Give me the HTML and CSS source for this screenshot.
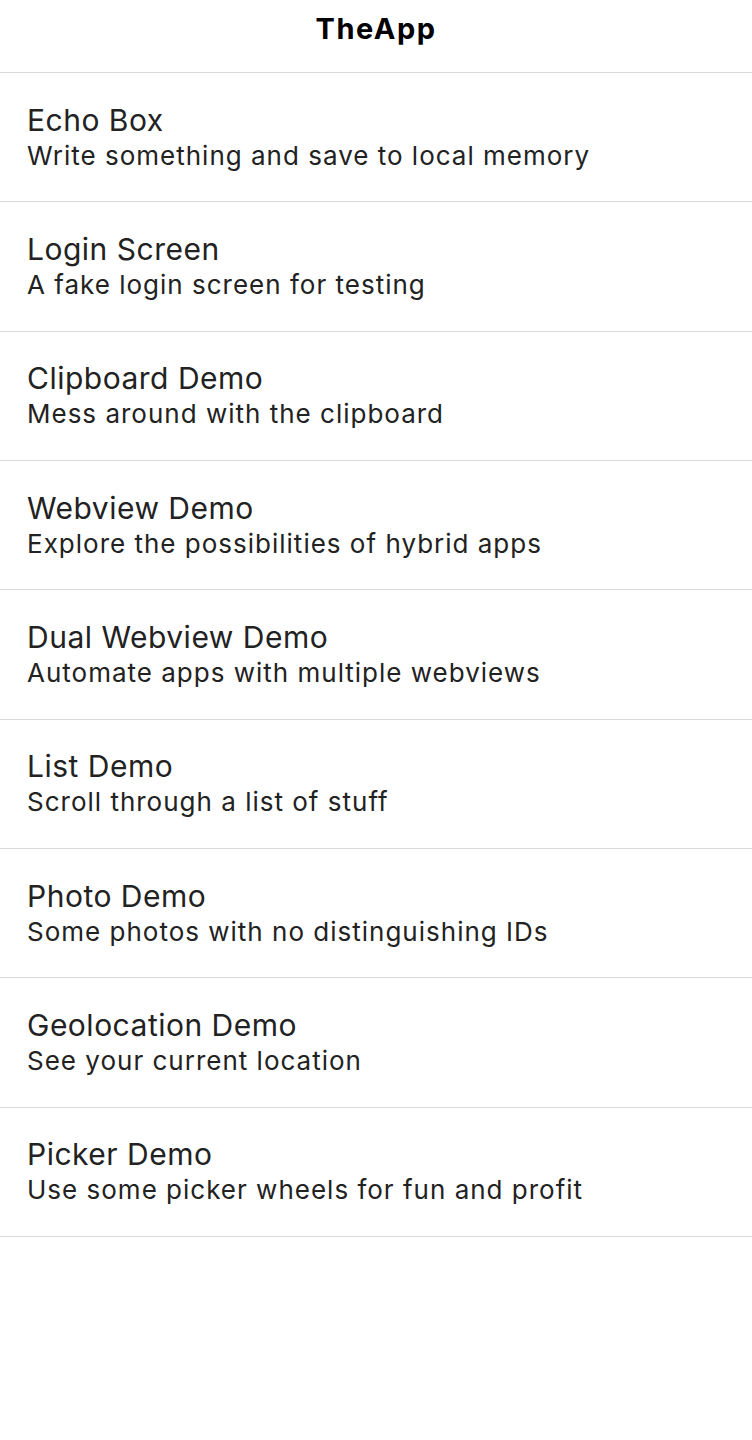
FILE: index.html
```html
<!DOCTYPE html>
<html lang="en">
<head>
<meta charset="utf-8">
<title>TheApp</title>
<link rel="stylesheet" href="styles.css">
</head>
<body>
<header class="nav">
  <h1 class="nav-title">TheApp</h1>
</header>
<ul class="list">
  <li class="row"><span class="row-title">Echo Box</span><span class="row-sub">Write something and save to local memory</span></li>
  <li class="row"><span class="row-title">Login Screen</span><span class="row-sub">A fake login screen for testing</span></li>
  <li class="row"><span class="row-title">Clipboard Demo</span><span class="row-sub">Mess around with the clipboard</span></li>
  <li class="row"><span class="row-title">Webview Demo</span><span class="row-sub">Explore the possibilities of hybrid apps</span></li>
  <li class="row"><span class="row-title">Dual Webview Demo</span><span class="row-sub">Automate apps with multiple webviews</span></li>
  <li class="row"><span class="row-title">List Demo</span><span class="row-sub">Scroll through a list of stuff</span></li>
  <li class="row"><span class="row-title">Photo Demo</span><span class="row-sub">Some photos with no distinguishing IDs</span></li>
  <li class="row"><span class="row-title">Geolocation Demo</span><span class="row-sub">See your current location</span></li>
  <li class="row"><span class="row-title">Picker Demo</span><span class="row-sub">Use some picker wheels for fun and profit</span></li>
</ul>
</body>
</html>
```
FILE: styles.css
```css
* { box-sizing: border-box; }
html, body {
  margin: 0;
  padding: 0;
  background: #ffffff;
}
body {
  font-family: Inter, "Noto Sans", "Liberation Sans", sans-serif;
  color: #222222;
  width: 752px;
  min-height: 1440px;
}
.nav {
  height: 73px;
  border-bottom: 1px solid #d9d9d9;
  display: flex;
  justify-content: center;
  padding-top: 11px;
}
.nav-title {
  margin: 0;
  font-size: 29px;
  line-height: 36px;
  font-weight: 700;
  letter-spacing: 1.5px;
  color: #000000;
}
.list {
  list-style: none;
  margin: 0;
  padding: 0;
}
.row {
  height: 129.33px;
  border-bottom: 1px solid #d9d9d9;
  display: flex;
  flex-direction: column;
  justify-content: center;
  padding: 0 27px;
}
.row-title {
  font-size: 30px;
  line-height: 36px;
  letter-spacing: 0.5px;
}
.row-sub {
  font-size: 26px;
  line-height: 35px;
  letter-spacing: 1px;
}
```
